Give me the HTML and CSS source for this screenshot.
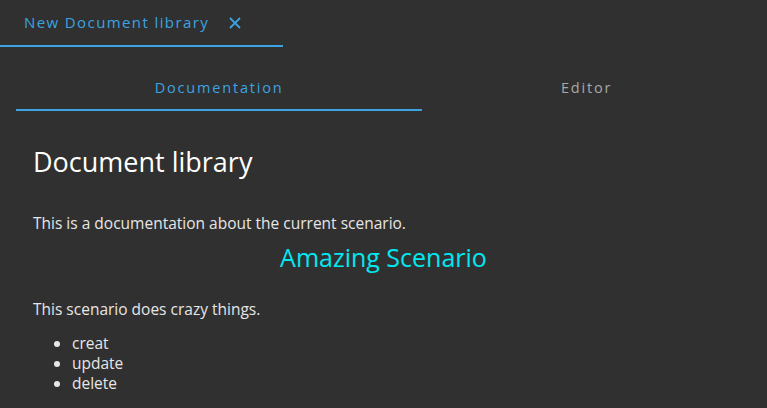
FILE: index.html
```html
<!DOCTYPE html>
<html lang="en">
<head>
<meta charset="UTF-8">
<meta name="viewport" content="width=device-width, initial-scale=1.0">
<title>Document library</title>
<link rel="stylesheet" href="styles.css">
</head>
<body>

<div class="doc-tabs">
  <div class="doc-tab active">
    <span>New Document library</span>
    <svg class="close" width="12" height="12" viewBox="0 0 12 12">
      <path d="M1 1 L11 11 M11 1 L1 11" stroke="#3ca3e0" stroke-width="1.8" fill="none"/>
    </svg>
  </div>
</div>

<div class="container">
  <div class="view-tabs">
    <div class="view-tab active">Documentation</div>
    <div class="view-tab">Editor</div>
  </div>

  <div class="content">
    <h1>Document library</h1>
    <p>This is a documentation about the current scenario.</p>
    <h2>Amazing Scenario</h2>
    <p>This scenario does crazy things.</p>
    <ul>
      <li>creat</li>
      <li>update</li>
      <li>delete</li>
    </ul>
  </div>
</div>

</body>
</html>
```

FILE: styles.css
```css
body {
  margin: 0;
  font-family: "Open Sans", sans-serif;
  background-color: #303030;
  color: #e6e6e6;
}

.doc-tabs {
  display: flex;
}

.doc-tab {
  display: flex;
  align-items: center;
  gap: 20px;
  height: 47px;
  padding: 0 42px 0 24px;
  border-bottom: 2px solid #3ca3e0;
  box-sizing: border-box;
  color: #3ca3e0;
  font-size: 15px;
  letter-spacing: 1.4px;
}

.doc-tab span {
  margin-top: -2px;
}

.container {
  padding: 0 16px;
}

.view-tabs {
  display: flex;
  margin-top: 16px;
}

.view-tab {
  flex: 1 1 auto;
  text-align: center;
  height: 48px;
  line-height: 49px;
  box-sizing: border-box;
  font-size: 14.5px;
  letter-spacing: 1.8px;
  color: #a8a8a8;
}

.view-tab.active {
  color: #3ca3e0;
  border-bottom: 2px solid #3ca3e0;
}

.content {
  padding: 0 17px;
}

h1 {
  font-weight: 400;
  font-size: 27px;
  line-height: 32px;
  color: #fff;
  margin: 35px 0 0;
}

p {
  font-size: 15.5px;
  line-height: 20px;
  margin: 35px 0 0;
}

h2 {
  font-weight: 400;
  font-size: 25px;
  line-height: 30px;
  color: #00e8f0;
  text-align: center;
  margin: 9px 0 0;
}

h2 + p {
  margin-top: 27px;
}

ul {
  margin: 14px 0 0;
  padding-left: 39px;
  font-size: 15.5px;
  line-height: 20px;
}
```
